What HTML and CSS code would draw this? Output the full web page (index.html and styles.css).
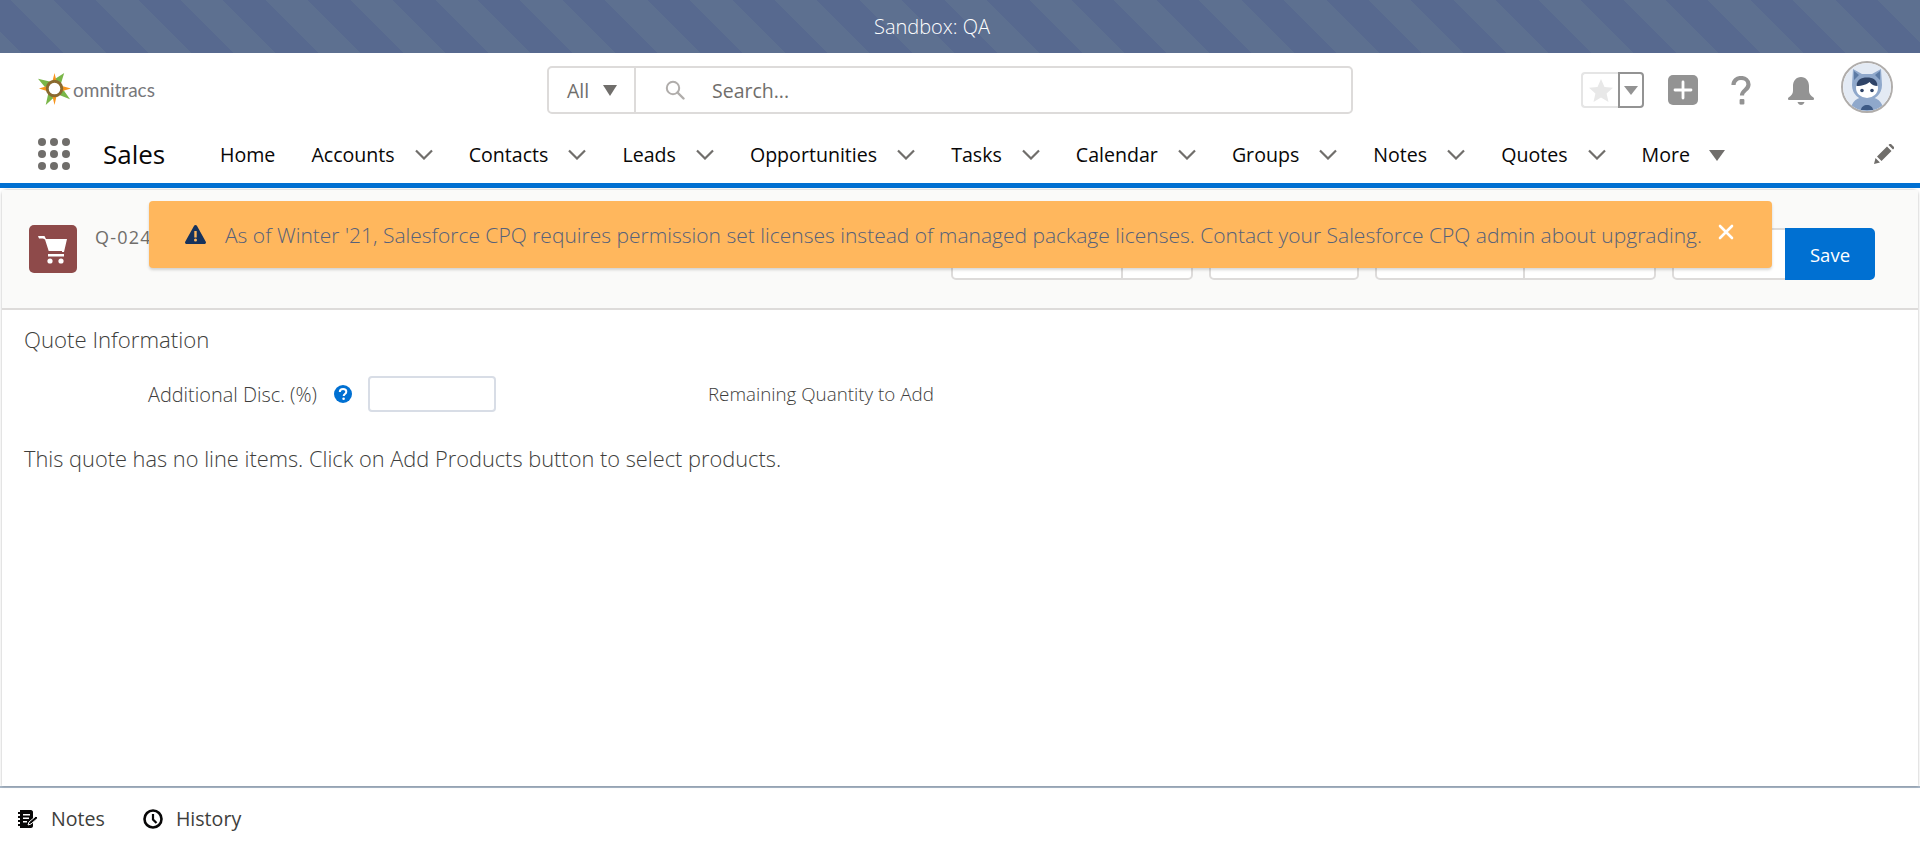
FILE: index.html
```html
<!DOCTYPE html>
<html lang="en">
<head>
<meta charset="utf-8">
<title>Quote Line Editor</title>
<link rel="stylesheet" href="styles.css">
</head>
<body>

<div class="sandbox-bar">Sandbox: QA</div>

<header class="global-header">
  <div class="logo">
    <svg width="33" height="33" viewBox="0 0 34 34">
      <polygon points="0,6 13,9 27,0 23,13 33,27 20,22 8,33 11,19" fill="#7ab648"/>
      <polygon points="17,0 20,12 34,16 20,20 17,33 14,20 1,16 14,12" fill="#f7941e"/>
      <circle cx="17" cy="16" r="7.500" fill="#fff" stroke="#8a6a2f" stroke-width="3"/>
    </svg>
    <span class="logo-text">omnitracs</span>
  </div>
  <div class="search">
    <div class="search-scope">All <span class="caret"></span></div>
    <div class="search-input">
      <svg width="20" height="20" viewBox="0 0 20 20"><circle cx="8" cy="8" r="6.200" fill="none" stroke="#b0adab" stroke-width="2"/><path d="M12.500 12.500L18.500 18.500" stroke="#b0adab" stroke-width="2.400" stroke-linecap="round"/></svg>
      <span>Search...</span>
    </div>
  </div>
  <div class="header-actions">
    <div class="fav-group">
      <div class="fav-star">
        <svg width="24" height="23" viewBox="0 0 24 23"><polygon points="12,0 15.500,8 24,8.800 17.600,14.400 19.500,23 12,18.500 4.500,23 6.400,14.400 0,8.800 8.500,8" fill="#e8e8e8"/></svg>
      </div>
      <div class="fav-more"><span class="caret small"></span></div>
    </div>
    <div class="add-btn">
      <svg width="20" height="20" viewBox="0 0 20 20"><path d="M10 2V18M2 10H18" stroke="#fff" stroke-width="2.800" stroke-linecap="round"/></svg>
    </div>
    <svg class="help-icon" width="20" height="30" viewBox="0 0 20 30"><path d="M2.500 9C2.500 4.500 6 2 10 2c4.300 0 7.500 2.500 7.500 6.500 0 5.500-6.500 5.500-6.500 11" fill="none" stroke="#939393" stroke-width="4.200"/><rect x="8.600" y="23" width="4.800" height="5.500" rx="1" fill="#939393"/></svg>
    <svg class="bell-icon" width="28" height="29" viewBox="0 0 28 29"><path d="M14 1c-5 0-8 4-8 9v5c0 3-2 5-4.500 6.500C.5 22.500 1 24 2 24h24c1 0 1.500-1.500.5-2.500C24 20 22 18 22 15v-5c0-5-3-9-8-9z" fill="#939393"/><path d="M10.500 26h7c-.5 2-2 3-3.500 3s-3-1-3.500-3z" fill="#939393"/></svg>
    <div class="avatar">
      <svg width="48" height="48" viewBox="0 0 48 48">
        <circle cx="24" cy="24" r="24" fill="#e3eaf4"/>
        <path d="M8 48c0-10 6-14 16-14s16 4 16 14z" fill="#8fa8cb"/>
        <path d="M10 6l9 5h10l9-5 1 16c0 9-7 15-15 15S9 31 9 22z" fill="#8fa8cb"/>
        <path d="M11 8l5 4-5 5zM37 8l-5 4 5 5z" fill="#5d7ba5"/>
        <ellipse cx="24" cy="25" rx="11" ry="10" fill="#fff"/>
        <path d="M13.500 23c0-6 4.500-8.500 10.500-8.500s10.500 2.500 10.500 8.500c-3.500 0-6-1.500-8-4-2 2-7 4-13 4z" fill="#2f4468"/>
        <circle cx="19" cy="27.500" r="1.800" fill="#2f4468"/>
        <circle cx="29" cy="27.500" r="1.800" fill="#2f4468"/>
        <path d="M18 47c0-3 3-5 6-5s6 2 6 5z" fill="#3d5a85"/>
      </svg>
    </div>
  </div>
</header>

<nav class="app-nav">
  <div class="waffle">
    <i></i><i></i><i></i><i></i><i></i><i></i><i></i><i></i><i></i>
  </div>
  <div class="app-name">Sales</div>
  <ul class="nav-list">
    <li class="nav-item">Home</li>
    <li class="nav-item">Accounts <svg class="chev" width="18" height="11" viewBox="0 0 18 11"><path d="M1 1.500L9 9.500 17 1.500" fill="none" stroke="#706e6b" stroke-width="2.200"/></svg></li>
    <li class="nav-item">Contacts <svg class="chev" width="18" height="11" viewBox="0 0 18 11"><path d="M1 1.500L9 9.500 17 1.500" fill="none" stroke="#706e6b" stroke-width="2.200"/></svg></li>
    <li class="nav-item">Leads <svg class="chev" width="18" height="11" viewBox="0 0 18 11"><path d="M1 1.500L9 9.500 17 1.500" fill="none" stroke="#706e6b" stroke-width="2.200"/></svg></li>
    <li class="nav-item">Opportunities <svg class="chev" width="18" height="11" viewBox="0 0 18 11"><path d="M1 1.500L9 9.500 17 1.500" fill="none" stroke="#706e6b" stroke-width="2.200"/></svg></li>
    <li class="nav-item">Tasks <svg class="chev" width="18" height="11" viewBox="0 0 18 11"><path d="M1 1.500L9 9.500 17 1.500" fill="none" stroke="#706e6b" stroke-width="2.200"/></svg></li>
    <li class="nav-item">Calendar <svg class="chev" width="18" height="11" viewBox="0 0 18 11"><path d="M1 1.500L9 9.500 17 1.500" fill="none" stroke="#706e6b" stroke-width="2.200"/></svg></li>
    <li class="nav-item">Groups <svg class="chev" width="18" height="11" viewBox="0 0 18 11"><path d="M1 1.500L9 9.500 17 1.500" fill="none" stroke="#706e6b" stroke-width="2.200"/></svg></li>
    <li class="nav-item">Notes <svg class="chev" width="18" height="11" viewBox="0 0 18 11"><path d="M1 1.500L9 9.500 17 1.500" fill="none" stroke="#706e6b" stroke-width="2.200"/></svg></li>
    <li class="nav-item">Quotes <svg class="chev" width="18" height="11" viewBox="0 0 18 11"><path d="M1 1.500L9 9.500 17 1.500" fill="none" stroke="#706e6b" stroke-width="2.200"/></svg></li>
    <li class="nav-item">More <span class="caret dark"></span></li>
  </ul>
  <svg class="pencil" width="20" height="20" viewBox="0 0 20 20"><path d="M0 20l1.500-6L6 18.500zM3 12.500L13 2.500l4.500 4.500-10 10zM14.500 1l1-1c.5-.3 1-.3 1.500 0l3 3c.3.5.3 1 0 1.500l-1 1z" fill="#706e6b"/></svg>
</nav>

<main class="page-card">
  <div class="alert">
    <svg class="alert-icon" width="21" height="19" viewBox="0 0 21 19"><path d="M10.500 0c.6 0 1.100.3 1.400.8l8.900 16c.5 1-.2 2.200-1.400 2.200H1.600C.4 19-.3 17.800.2 16.800l8.900-16c.3-.5.8-.8 1.400-.8z" fill="#16325c"/><rect x="9.300" y="6" width="2.400" height="6.500" fill="#ffb75d"/><circle cx="10.500" cy="15" r="1.500" fill="#ffb75d"/></svg>
    <span class="alert-text">As of Winter '21, Salesforce CPQ requires permission set licenses instead of managed package licenses. Contact your Salesforce CPQ admin about upgrading.</span>
    <svg class="alert-close" width="16" height="16" viewBox="0 0 16 16"><path d="M2 2L14 14M14 2L2 14" stroke="#fff" stroke-width="2.600" stroke-linecap="round"/></svg>
  </div>

  <div class="card-header">
    <div class="quote-icon">
      <svg width="34" height="34" viewBox="0 0 34 34"><path d="M2 4h6.500l1.500 3H31l-3 13H13L9 7.500 7 6.500H3z" fill="#fff"/><rect x="11" y="19" width="15" height="2" fill="#8e4a4a"/><rect x="12" y="22" width="16" height="2.500" fill="#fff"/><circle cx="14" cy="29" r="2.600" fill="#fff"/><circle cx="25" cy="29" r="2.600" fill="#fff"/></svg>
    </div>
    <div class="quote-number">Q-02456</div>
    <div class="btn-row">
      <div class="btn-group"><span class="btn w172"></span><span class="btn w72"></span></div>
      <div class="btn-group"><span class="btn w150"></span></div>
      <div class="btn-group"><span class="btn w150"></span><span class="btn w133"></span></div>
      <div class="btn-group"><span class="btn w115"></span><span class="btn save">Save</span></div>
    </div>
  </div>

  <div class="card-body">
    <h2 class="section-title">Quote Information</h2>
    <div class="field-row">
      <label class="field-label wide">Additional Disc. (%)</label>
      <svg class="help-dot" width="18" height="18" viewBox="0 0 18 18"><circle cx="9" cy="9" r="9" fill="#0070d2"/><path d="M5.800 7c0-2 1.500-3 3.300-3 1.900 0 3.200 1.100 3.200 2.700 0 2.400-2.600 2.300-2.600 4.300" fill="none" stroke="#fff" stroke-width="2"/><circle cx="9.600" cy="13.800" r="1.300" fill="#fff"/></svg>
      <div class="field-input"></div>
      <span class="field-label remaining">Remaining Quantity to Add</span>
    </div>
    <p class="empty-note">This quote has no line items. Click on Add Products button to select products.</p>
  </div>
</main>

<footer class="util-bar">
  <div class="util-item">
    <svg width="20" height="18" viewBox="0 0 20 18"><path d="M2 0h11c1 0 2 1 2 2v14c0 1-1 2-2 2H2v-2H0v-2h2v-2H0v-2h2V8H0V6h2V4H0V2h2z" fill="#080707"/><path d="M5 4h7v1.500H5zM5 7.500h6V9H5zM5 11h4v1.500H5z" fill="#fff"/><path d="M10 15l1-3 7-6 2 2-7 6z" fill="#080707" stroke="#fff"/></svg>
    <span>Notes</span>
  </div>
  <div class="util-item">
    <svg width="20" height="20" viewBox="0 0 20 20"><circle cx="10" cy="10" r="8.500" fill="none" stroke="#080707" stroke-width="2.600"/><path d="M10 5v5.500l3.500 3.500" fill="none" stroke="#080707" stroke-width="2.200"/></svg>
    <span>History</span>
  </div>
</footer>

</body>
</html>
```

FILE: styles.css
```css
* {
  box-sizing: border-box;
}
html, body {
  height: 100%;
}
body {
  margin: 0;
  display: flex;
  flex-direction: column;
  overflow: hidden;
  background: #fff;
  color: #3e3e3c;
  font-family: "Open Sans", "Noto Sans", sans-serif;
  font-weight: 300;
}

/* top strip */
.sandbox-bar {
  height: 53px;
  display: flex;
  align-items: center;
  justify-content: center;
  padding-right: 56px;
  color: #fff;
  font-size: 20px;
  background: repeating-linear-gradient(-135deg, #5d7090 0, #5d7090 30px, #57698f 30px, #57698f 60px);
}

/* logo, search, actions */
.global-header {
  height: 72px;
  display: flex;
  align-items: center;
  padding: 0 27px 0 38px;
}
.logo {
  width: 509px;
  display: flex;
  align-items: center;
  gap: 2px;
  margin-top: 0;
}
.logo-text {
  font-size: 19px;
  font-weight: 400;
  color: #77787b;
  font-family: "Lato", sans-serif;
}
.search {
  width: 806px;
  height: 48px;
  display: flex;
  border: 2px solid #dddbda;
  border-radius: 5px;
  margin-top: 2px;
  font-size: 19.500px;
  font-weight: 400;
  color: #706e6b;
}
.search-scope {
  width: 87px;
  display: flex;
  align-items: center;
  gap: 14px;
  padding-left: 18px;
  border-right: 2px solid #dddbda;
}
.search-input {
  display: flex;
  align-items: center;
  gap: 27px;
  padding-left: 29px;
}
.caret {
  width: 0;
  height: 0;
  display: inline-block;
  border-left: 7px solid transparent;
  border-right: 7px solid transparent;
  border-top: 11px solid #706e6b;
}
.caret.small {
  border-top-width: 9px;
  border-top-color: #939393;
}
.caret.dark {
  margin-left: 19px;
  margin-top: 2px;
  border-left-width: 8px;
  border-right-width: 8px;
}
.header-actions {
  margin-left: auto;
  display: flex;
  align-items: center;
  margin-top: -4px;
}
.fav-group {
  display: flex;
  height: 36px;
  width: 63px;
  margin-top: 6px;
}
.fav-star {
  width: 37px;
  display: flex;
  align-items: center;
  justify-content: center;
  border: 2px solid #e5e5e5;
  border-right: none;
  border-radius: 4px 0 0 4px;
}
.fav-more {
  width: 26px;
  display: flex;
  align-items: center;
  justify-content: center;
  border: 2px solid #939393;
  border-radius: 0 4px 4px 0;
}
.add-btn {
  width: 30px;
  height: 30px;
  margin-left: 24px;
  margin-top: 6px;
  display: flex;
  align-items: center;
  justify-content: center;
  background: #939393;
  border-radius: 5px;
}
.help-icon {
  margin-left: 33px;
  margin-top: 7px;
}
.bell-icon {
  margin-left: 36px;
  margin-top: 6px;
}
.avatar {
  width: 52px;
  height: 52px;
  margin-left: 26px;
  border: 2px solid #b0adab;
  border-radius: 50%;
  overflow: hidden;
}
.avatar svg {
  display: block;
}

/* app nav */
.app-nav {
  height: 63px;
  display: flex;
  align-items: center;
  padding: 0 26px 0 38px;
  border-bottom: 5px solid #0070d2;
  color: #080707;
}
.waffle {
  width: 32px;
  display: grid;
  grid-template-columns: repeat(3, 8px);
  gap: 4px;
}
.waffle i {
  width: 8px;
  height: 8px;
  border-radius: 50%;
  background: #706e6b;
}
.app-name {
  width: 117px;
  margin-left: 33px;
  font-size: 26px;
  font-weight: 400;
}
.nav-list {
  list-style: none;
  display: flex;
  margin: 0;
  padding: 0;
  flex: 1;
  font-size: 19.600px;
  font-weight: 400;
}
.nav-item {
  display: flex;
  align-items: center;
  margin-right: 36px;
  white-space: nowrap;
}
.chev {
  margin-left: 20px;
}

/* main card */
.page-card {
  position: relative;
  flex: 1;
  margin: 2px 2px 0;
  border-radius: 5px 5px 0 0;
  box-shadow: 0 0 3px rgba(0, 0, 0, .3);
}
.alert {
  position: absolute;
  top: 11px;
  left: 147px;
  width: 1623px;
  height: 67px;
  z-index: 2;
  display: flex;
  align-items: center;
  padding-left: 36px;
  background: #ffb75d;
  border-radius: 4px;
  box-shadow: 0 2px 3px rgba(0, 0, 0, .16);
  font-size: 21px;
  color: #56617a;
}
.alert-icon {
  flex: none;
}
.alert-text {
  margin-left: 19px;
  white-space: nowrap;
}
.alert-close {
  margin-left: 16px;
  margin-top: -6px;
  flex: none;
}
.card-header {
  height: 120px;
  display: flex;
  padding: 35px 43px 0 27px;
  background: #fafaf9;
  border-bottom: 2px solid #dddbda;
}
.quote-icon {
  width: 48px;
  height: 48px;
  display: flex;
  align-items: center;
  justify-content: center;
  background: #8e4a4a;
  border-radius: 5px;
}
.quote-number {
  margin-left: 18px;
  margin-top: 0;
  font-size: 18px;
  font-weight: 400;
  letter-spacing: 1.200px;
  color: #706e6b;
}
.btn-row {
  margin-left: auto;
  display: flex;
  gap: 16px;
  margin-top: 3px;
}
.btn-group {
  display: flex;
  height: 52px;
}
.btn {
  display: block;
  background: #fff;
  border: 2px solid #dddbda;
  margin-left: -2px;
}
.btn-group .btn:first-child {
  margin-left: 0;
  border-radius: 5px 0 0 5px;
}
.btn-group .btn:last-child {
  border-radius: 0 5px 5px 0;
}
.btn-group .btn:only-child {
  border-radius: 5px;
}
.w172 { width: 172px; }
.w72 { width: 72px; }
.w150 { width: 150px; }
.w133 { width: 133px; }
.w115 { width: 115px; }
.btn.save {
  width: 90px;
  display: flex;
  align-items: center;
  justify-content: center;
  background: #0070d2;
  border-color: #0070d2;
  color: #fff;
  font-size: 18.500px;
  font-weight: 500;
}
.card-body {
  padding: 14px 22px;
}
.section-title {
  margin: 0;
  font-size: 22.200px;
  font-weight: 300;
  color: #3e3e3c;
}
.field-row {
  display: flex;
  align-items: center;
  margin-top: 21px;
  padding-left: 124px;
}
.field-label {
  font-size: 18.800px;
  white-space: nowrap;
}
.field-label.wide {
  font-size: 19.900px;
}
.help-dot {
  margin-left: 17px;
}
.field-input {
  width: 128px;
  height: 36px;
  margin-left: 16px;
  background: #fff;
  border: 2px solid #d8dde6;
  border-radius: 4px;
}
.remaining {
  margin-left: 212px;
}
.empty-note {
  margin: 32px 0 0;
  font-size: 21.800px;
}

/* bottom utility bar */
.util-bar {
  height: 63px;
  display: flex;
  align-items: center;
  gap: 38px;
  padding-left: 18px;
  border-top: 2px solid #a8b7c7;
  font-size: 19.600px;
  font-weight: 400;
}
.util-item {
  display: flex;
  align-items: center;
  gap: 13px;
}
```
